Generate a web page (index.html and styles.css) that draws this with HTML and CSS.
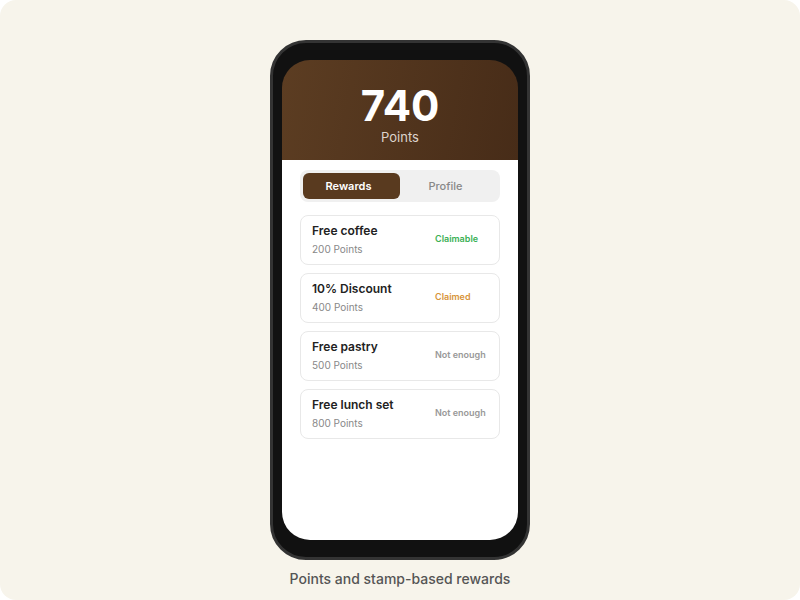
FILE: index.html
```
<!DOCTYPE html>
<html lang="en">
<head>
  <meta charset="UTF-8" />
  <meta name="viewport" content="width=device-width, initial-scale=1.0" />
  <title>Rewards</title>
  <link rel="stylesheet" href="styles.css">
</head>
<body>
  <main class="showcase">
    <div class="phone">
      <div class="screen">
        <header class="balance">
          <h1 class="balance-value">740</h1>
          <p class="balance-label">Points</p>
        </header>

        <div class="content">
          <nav class="tabs">
            <button type="button" class="tab active">Rewards</button>
            <button type="button" class="tab">Profile</button>
          </nav>

          <ul class="rewards">
            <li class="reward">
              <div>
                <h2>Free coffee</h2>
                <p>200 Points</p>
              </div>
              <span class="status claimable">Claimable</span>
            </li>
            <li class="reward">
              <div>
                <h2>10% Discount</h2>
                <p>400 Points</p>
              </div>
              <span class="status claimed">Claimed</span>
            </li>
            <li class="reward">
              <div>
                <h2>Free pastry</h2>
                <p>500 Points</p>
              </div>
              <span class="status">Not enough</span>
            </li>
            <li class="reward">
              <div>
                <h2>Free lunch set</h2>
                <p>800 Points</p>
              </div>
              <span class="status">Not enough</span>
            </li>
          </ul>
        </div>
      </div>
    </div>
    <p class="caption">Points and stamp-based rewards</p>
  </main>
</body>
</html>
```

FILE: styles.css
```
* {
  box-sizing: border-box;
  margin: 0;
  padding: 0;
}

body {
  font-family: Inter, sans-serif;
  background: #fff;
}

.showcase {
  min-height: 100vh;
  padding: 40px 20px 11px;
  background: #f7f4eb;
  border-radius: 16px;
  display: flex;
  flex-direction: column;
  align-items: center;
}

.phone {
  display: flex;
  flex: 1;
  width: 100%;
  max-width: 260px;
  padding: 17px 9px;
  background: #111;
  border: 3px solid #333;
  border-radius: 36px;
}

.screen {
  flex: 1;
  display: flex;
  flex-direction: column;
  border-radius: 28px;
  overflow: hidden;
}

/* Points balance */
.balance {
  padding: 24px 18px 14px;
  background: linear-gradient(100deg, #5c3d22, #472c18);
  color: #fff;
  text-align: center;
}

.balance-value {
  font-size: 42px;
  line-height: 44px;
  font-weight: 700;
}

.balance-label {
  font-size: 13px;
  line-height: 18px;
  color: #ddd4cc;
}

.content {
  flex: 1;
  padding: 10px 18px;
  background: #fff;
}

/* Tabs */
.tabs {
  display: flex;
  padding: 3px;
  margin-bottom: 13px;
  background: #f0f0f0;
  border-radius: 8px;
}

.tab {
  flex: 1;
  height: 26px;
  padding-right: 6px;
  background: none;
  border: none;
  border-radius: 6px;
  font-family: inherit;
  font-size: 11px;
  font-weight: 500;
  color: #888;
  cursor: pointer;
}

.tab.active {
  background: #593a1f;
  font-weight: 600;
  color: #fff;
}

/* Reward list */
.rewards {
  display: grid;
  gap: 8px;
  list-style: none;
}

.reward {
  display: flex;
  align-items: center;
  justify-content: space-between;
  padding: 6px 11px;
  border: 1px solid #e8e8e8;
  border-radius: 8px;
}

.reward h2 {
  font-size: 12px;
  line-height: 18px;
  font-weight: 600;
  color: #222;
}

.reward p {
  font-size: 10px;
  line-height: 18px;
  color: #888;
}

.status {
  width: 53px;
  padding-bottom: 2px;
  font-size: 9px;
  line-height: 12px;
  font-weight: 600;
  color: #999;
  white-space: nowrap;
}

.status.claimable { color: #3bb054; }

.status.claimed { color: #d8943a; }

.caption {
  margin-top: 9px;
  font-size: 14px;
  line-height: 20px;
  font-weight: 500;
  color: #555;
}
```
